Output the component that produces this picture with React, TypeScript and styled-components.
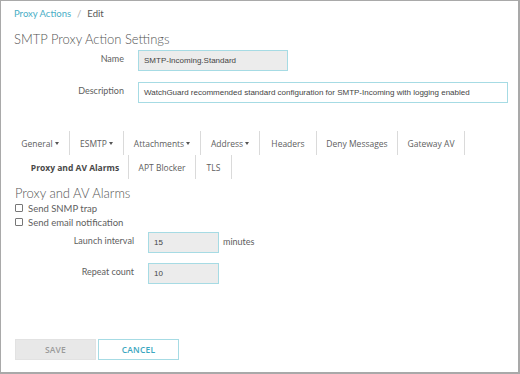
import React from "react";
import styled, { createGlobalStyle } from "styled-components";

const Global = createGlobalStyle`
  html, body { margin: 0; padding: 0; background: #fff; }
  * { box-sizing: border-box; }
`;

const Frame = styled.div`
  width: 520px;
  height: 374px;
  border: 1px solid #a9a9a9;
  border-right-width: 2px;
  border-bottom-width: 2px;
  padding: 5px 12px 0 13px;
  display: flex;
  flex-direction: column;
  font-family: Lato, "Open Sans", sans-serif;
  color: #5a5a5a;
`;

const Breadcrumb = styled.div`
  display: flex;
  gap: 6px;
  height: 16px;
  line-height: 16px;
  font-size: 9.5px;
`;

const Crumb = styled.span<{ $link?: boolean }>`
  color: ${(p) => (p.$link ? "#49aec6" : "#555")};
`;

const Sep = styled.span`
  color: #aaa;
`;

const Title = styled.h1`
  margin: 7px 0 0;
  font-size: 13px;
  line-height: 20px;
  font-weight: 300;
  color: #555;
`;

const FieldRow = styled.div<{ $mt: number }>`
  display: grid;
  grid-template-columns: 110px auto auto;
  column-gap: 14px;
  align-items: center;
  margin-top: ${(p) => p.$mt}px;
`;

const Label = styled.label`
  text-align: right;
  font-size: 9px;
  color: #606060;
  margin-top: -4px;
`;

const Input = styled.div<{ $w: number; $disabled?: boolean }>`
  width: ${(p) => p.$w}px;
  height: 21px;
  border: 1px solid #a6dbe4;
  background: ${(p) => (p.$disabled ? "#ececec" : "#fff")};
  font-family: "Liberation Sans", Arial, sans-serif;
  font-size: 8px;
  color: #444;
  display: flex;
  align-items: center;
  padding-left: 5px;
  white-space: nowrap;
`;

const Tabs = styled.div`
  margin-top: 28px;
  display: flex;
  flex-direction: column;
`;

const TabRow = styled.div<{ $indent: number }>`
  display: flex;
  height: 24px;
  margin-left: ${(p) => p.$indent}px;
`;

const Tab = styled.div<{ $active?: boolean; $w: number }>`
  width: ${(p) => p.$w}px;
  border-right: 1px solid #dadada;
  display: flex;
  align-items: center;
  justify-content: center;
  font-family: "Open Sans", sans-serif;
  font-size: 8.5px;
  font-weight: ${(p) => (p.$active ? 700 : 400)};
  color: ${(p) => (p.$active ? "#484848" : "#606060")};
  white-space: nowrap;
`;

const Caret = styled.span`
  display: inline-block;
  width: 0;
  height: 0;
  margin-left: 2px;
  border-left: 2.5px solid transparent;
  border-right: 2.5px solid transparent;
  border-top: 3px solid #555;
`;

const SectionTitle = styled.h2`
  margin: 6px 0 0 1px;
  font-size: 13px;
  line-height: 16px;
  font-weight: 300;
  color: #555;
`;

const CheckRow = styled.label`
  display: flex;
  align-items: center;
  gap: 5px;
  height: 14px;
  margin-left: 1px;
  font-size: 9.5px;
  color: #606060;
`;

const Box = styled.span`
  width: 8px;
  height: 8px;
  border: 1px solid #777;
  border-radius: 1px;
  background: #fff;
`;

const AlarmRow = styled.div<{ $mt: number }>`
  display: grid;
  grid-template-columns: 120px 71px auto;
  column-gap: 14px;
  align-items: center;
  margin-top: ${(p) => p.$mt}px;
`;

const Unit = styled.span`
  font-size: 9px;
  color: #606060;
  margin-left: -10px;
  margin-top: -3px;
`;

const Actions = styled.div`
  margin-top: 55px;
  margin-left: 1px;
  display: flex;
  gap: 2px;
`;

const Button = styled.button<{ $primary?: boolean }>`
  width: 81px;
  height: 21px;
  font-family: "Open Sans", sans-serif;
  font-size: 8.5px;
  font-weight: 600;
  letter-spacing: 0.2px;
  border: 1px solid ${(p) => (p.$primary ? "#e2e2e2" : "#a6dbe4")};
  background: ${(p) => (p.$primary ? "#e8e8e8" : "#fff")};
  color: ${(p) => (p.$primary ? "#9a9a9a" : "#3aa6c0")};
  padding: 0;
`;

const row1 = [
  { t: "General", c: true, w: 59 },
  { t: "ESMTP", c: true, w: 54 },
  { t: "Attachments", c: true, w: 77 },
  { t: "Address", c: true, w: 59 },
  { t: "Headers", w: 57 },
  { t: "Deny Messages", w: 81 },
  { t: "Gateway AV", w: 67 },
];

const row2 = [
  { t: "Proxy and AV Alarms", a: true, w: 107 },
  { t: "APT Blocker", w: 67 },
  { t: "TLS", w: 36 },
];

export default function App() {
  return (
    <>
      <Global />
      <Frame>
        <Breadcrumb>
          <Crumb $link>Proxy Actions</Crumb>
          <Sep>/</Sep>
          <Crumb>Edit</Crumb>
        </Breadcrumb>
        <Title>SMTP Proxy Action Settings</Title>
        <FieldRow $mt={1}>
          <Label>Name</Label>
          <Input $w={150} $disabled>SMTP-Incoming.Standard</Input>
        </FieldRow>
        <FieldRow $mt={11}>
          <Label>Description</Label>
          <Input $w={370}>
            WatchGuard recommended standard configuration for SMTP-Incoming with logging enabled
          </Input>
        </FieldRow>
        <Tabs>
          <TabRow $indent={-3}>
            {row1.map((x) => (
              <Tab key={x.t} $w={x.w}>
                {x.t}
                {x.c && <Caret />}
              </Tab>
            ))}
          </TabRow>
          <TabRow $indent={8}>
            {row2.map((x) => (
              <Tab key={x.t} $w={x.w} $active={x.a}>
                {x.t}
              </Tab>
            ))}
          </TabRow>
        </Tabs>
        <SectionTitle>Proxy and AV Alarms</SectionTitle>
        <CheckRow>
          <Box />
          Send SNMP trap
        </CheckRow>
        <CheckRow>
          <Box />
          Send email notification
        </CheckRow>
        <AlarmRow $mt={3}>
          <Label>Launch interval</Label>
          <Input $w={71} $disabled>15</Input>
          <Unit>minutes</Unit>
        </AlarmRow>
        <AlarmRow $mt={10}>
          <Label>Repeat count</Label>
          <Input $w={71} $disabled>10</Input>
        </AlarmRow>
        <Actions>
          <Button $primary>SAVE</Button>
          <Button>CANCEL</Button>
        </Actions>
      </Frame>
    </>
  );
}
